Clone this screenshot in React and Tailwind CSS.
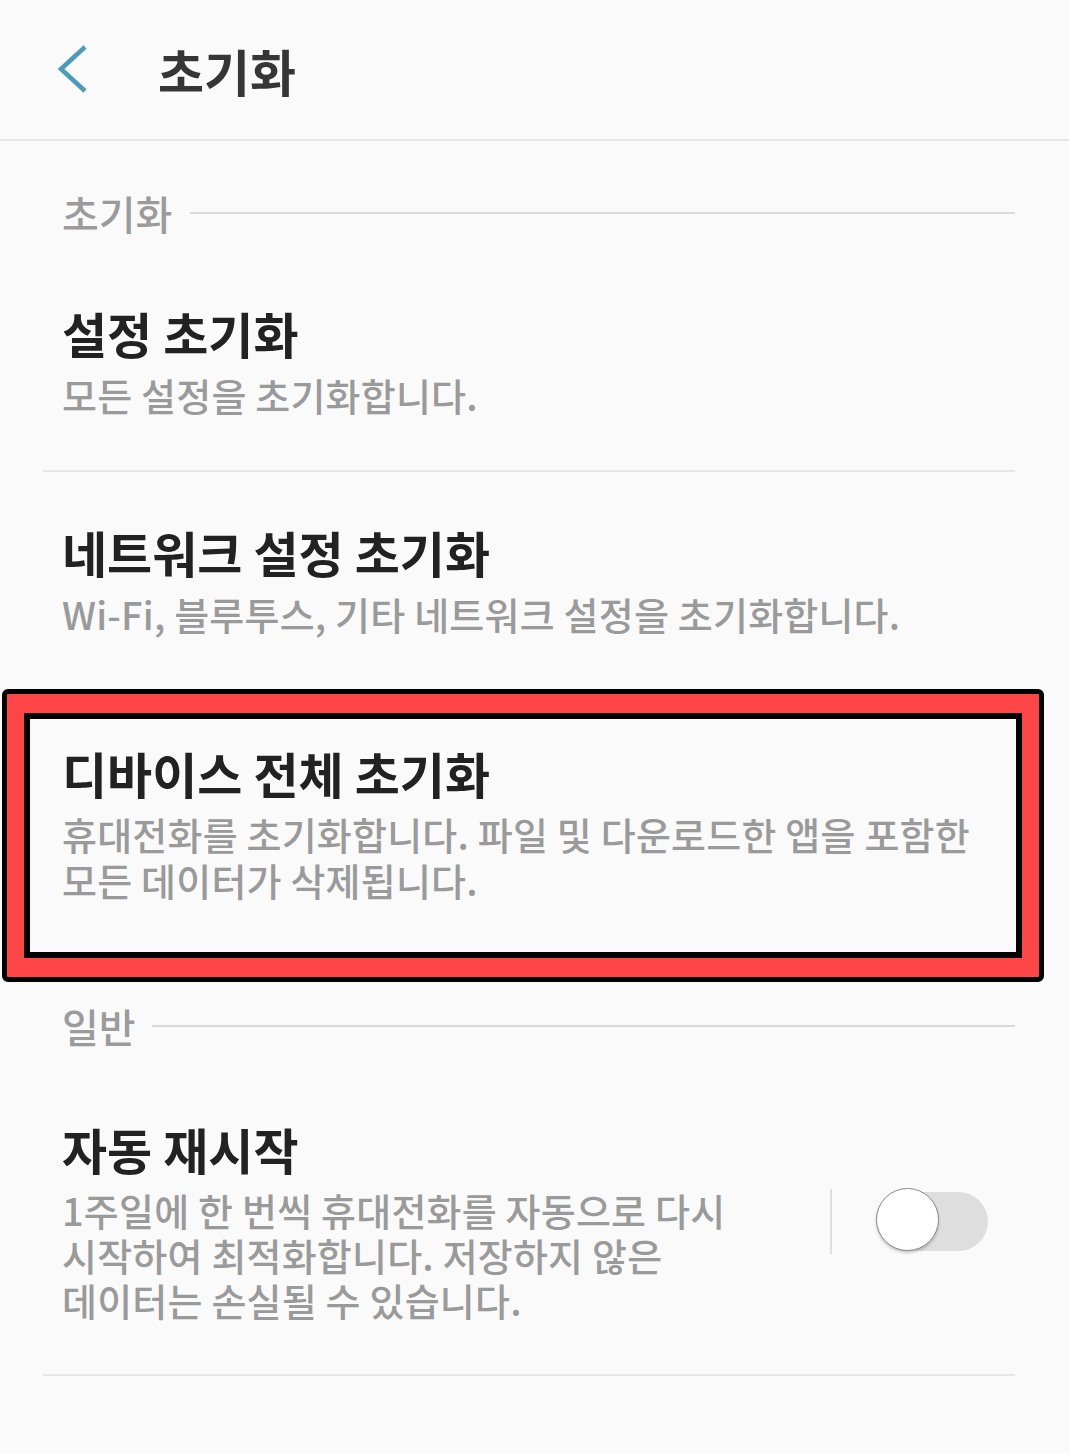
import React from "react";

const FONT = { fontFamily: '"Noto Sans CJK KR", "Noto Sans", sans-serif' };

function SectionHeader({ label, h, lineStart }) {
  return (
    <div className={`flex items-center ml-[43px] mr-[54px] ${h}`}>
      <span className="pl-[19px] text-[40px] leading-[48px] font-medium text-[#9b9b9b]">{label}</span>
      <div className={`flex-1 h-[2px] bg-[#d9d9d9] ${lineStart}`} />
    </div>
  );
}

function Title({ children }) {
  return <div className="text-[49px] leading-[56px] font-bold text-[#222222]">{children}</div>;
}

function Sub({ children }) {
  return <div className="mt-[11px] text-[38px] leading-[46px] font-medium text-[#9a9a9a] tracking-[0.2px]">{children}</div>;
}

export default function App() {
  return (
    <div className="w-[1069px] min-h-[1454px] bg-[#fafafa]" style={FONT}>
      {/* Header */}
      <div className="h-[141px] flex items-center border-b-2 border-[#e6e6e6]">
        <svg className="ml-[54px]" width="36" height="52" viewBox="0 0 36 52" fill="none">
          <polyline points="31,3 7,25 31,47" stroke="#4a9cba" strokeWidth="4.5" strokeLinecap="butt" strokeLinejoin="miter" />
        </svg>
        <span className="ml-[68px] text-[50px] leading-[56px] font-bold text-[#363636]">초기화</span>
      </div>

      <SectionHeader label="초기화" h="h-[144px]" lineStart="ml-[18px]" />

      {/* 설정 초기화 */}
      <div className="ml-[43px] mr-[54px] pl-[19px] pt-[20px] pb-[52px] border-b-2 border-[#e6e6e6]">
        <Title>설정 초기화</Title>
        <Sub>모든 설정을 초기화합니다.</Sub>
      </div>

      {/* 네트워크 설정 초기화 */}
      <div className="ml-[43px] mr-[54px] pl-[19px] pt-[52px] pb-[52px]">
        <Title>네트워크 설정 초기화</Title>
        <Sub>Wi-Fi, 블루투스, 기타 네트워크 설정을 초기화합니다.</Sub>
      </div>

      {/* Highlighted */}
      <div className="ml-[2px] w-[1042px] h-[293px] border-[5px] border-black rounded-[6px] bg-[#ff4646] px-[17px] py-[19px]">
        <div className="h-full border-[6px] border-black bg-[#fafafa] pl-[32px] pt-[26px]">
          <Title>디바이스 전체 초기화</Title>
          <div className="mt-[10px] text-[38px] leading-[46px] font-medium text-[#9a9a9a] tracking-[0.2px]">
            휴대전화를 초기화합니다. 파일 및 다운로드한 앱을 포함한
            <br />
            모든 데이터가 삭제됩니다.
          </div>
        </div>
      </div>

      <SectionHeader label="일반" h="h-[88px]" lineStart="ml-[16px]" />

      {/* 자동 재시작 */}
      <div className="ml-[43px] mr-[54px] pl-[19px] pt-[51px] pb-[52px] border-b-2 border-[#e6e6e6] flex items-center">
        <div className="flex-1">
          <Title>자동 재시작</Title>
          <div className="mt-[10px] text-[38px] leading-[45px] font-medium text-[#9a9a9a] tracking-[0.2px]">
            1주일에 한 번씩 휴대전화를 자동으로 다시
            <br />
            시작하여 최적화합니다. 저장하지 않은
            <br />
            데이터는 손실될 수 있습니다.
          </div>
        </div>
        <div className="flex items-center mb-[1px] mr-[27px]">
          <div className="w-[2px] h-[65px] bg-[#dddddd]" />
          <div className="relative ml-[45px] w-[111px] h-[59px] rounded-full bg-[#dedede]">
            <div className="absolute left-[-1px] top-[-4px] w-[63px] h-[63px] rounded-full bg-white border border-[#8a8a8a] shadow-[0_2px_3px_rgba(0,0,0,0.2)]" />
          </div>
        </div>
      </div>
    </div>
  );
}
